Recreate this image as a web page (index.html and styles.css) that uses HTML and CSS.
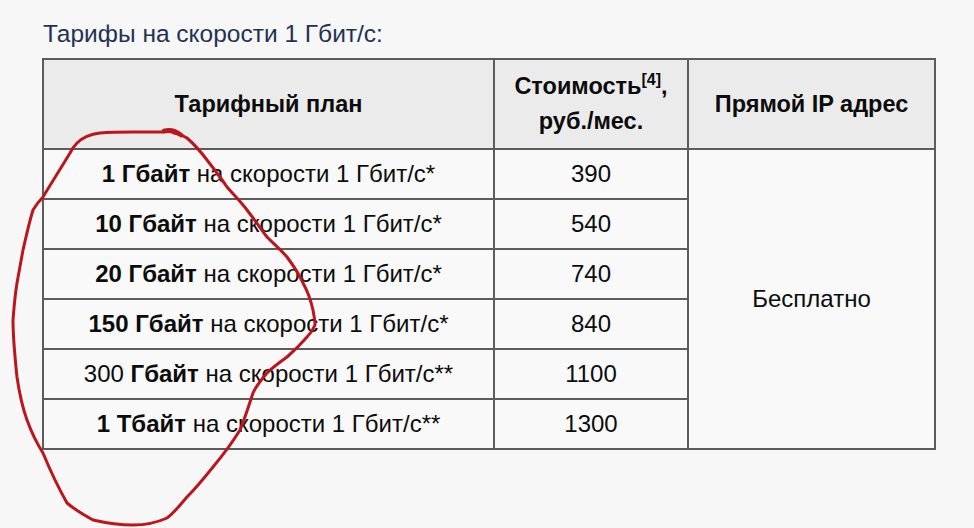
FILE: index.html
```html
<!DOCTYPE html>
<html lang="ru">
<head>
<meta charset="utf-8">
<title>Тарифы</title>
<link rel="stylesheet" href="styles.css">
</head>
<body>
<div class="page">
  <p class="title">Тарифы на скорости 1 Гбит/с:</p>
  <table class="tariffs">
    <colgroup>
      <col class="c1"><col class="c2"><col class="c3">
    </colgroup>
    <thead>
      <tr>
        <th>Тарифный план</th>
        <th>Стоимость<sup>[4]</sup>,<br>руб./мес.</th>
        <th>Прямой IP адрес</th>
      </tr>
    </thead>
    <tbody>
      <tr><td><b>1 Гбайт</b> на скорости 1 Гбит/с*</td><td>390</td><td rowspan="6">Бесплатно</td></tr>
      <tr><td><b>10 Гбайт</b> на скорости 1 Гбит/с*</td><td>540</td></tr>
      <tr><td><b>20 Гбайт</b> на скорости 1 Гбит/с*</td><td>740</td></tr>
      <tr><td><b>150 Гбайт</b> на скорости 1 Гбит/с*</td><td>840</td></tr>
      <tr><td>300 <b>Гбайт</b> на скорости 1 Гбит/с**</td><td>1100</td></tr>
      <tr><td><b>1 Тбайт</b> на скорости 1 Гбит/с**</td><td>1300</td></tr>
    </tbody>
  </table>
  <svg class="circle" width="974" height="528" viewBox="0 0 974 528">
    <path d="M77 143 C84 136 92 134 100 133 C112 132 122 132 133 132 L163 132 C168 131 171 131 174 133 C180 134 184 136 187 138 C195 145 201 152 207 160 C214 169 221 178 227 187 C234 195 241 202 247 210 C254 219 261 229 267 237 C274 244 281 250 287 257 C293 265 299 274 303 283 C308 292 311 301 313 310 C314 316 315 320 315 325 C313 330 310 334 307 337 C301 344 294 351 287 357 C280 362 273 367 267 373 C261 380 256 386 253 393 C249 405 245 418 240 430 C232 443 223 455 213 467 C205 477 196 488 187 497 C180 505 174 513 167 518 C156 523 145 525 133 525 C120 525 106 523 93 520 C84 515 75 510 67 503 C58 487 50 470 43 453 C36 442 31 431 27 420 C22 406 19 391 17 377 C15 358 13 339 13 320 C14 307 15 295 17 283 C19 272 21 261 23 250 C26 237 29 223 33 210 C36 205 39 201 43 197 C52 182 61 168 70 153 C72 149 74 146 77 143 Z" />
    <path class="blob" d="M164 131 C170 129 176 131 181 135" />
  </svg>
</div>
</body>
</html>
```

FILE: styles.css
```css
html, body {
  margin: 0;
  padding: 0;
  background: #f7f7f7;
}
.page {
  position: relative;
  width: 974px;
  height: 528px;
  overflow: hidden;
  font-family: "Liberation Sans", Arial, sans-serif;
  color: #0c0c0c;
}
.title {
  margin: 0;
  padding: 20px 0 0 43px;
  height: 37px;
  box-sizing: border-box;
  font-size: 24.5px;
  line-height: 28px;
  color: #1f3254;
}
.tariffs {
  margin-left: 42px;
  border-collapse: collapse;
  table-layout: fixed;
  width: 892px;
  font-size: 24px;
  margin-top: 21px;
}
.c1 { width: 451px; }
.c2 { width: 194px; }
.c3 { width: 247px; }
.tariffs th,
.tariffs td {
  border: 2px solid #5c5c5c;
  text-align: center;
  padding: 0;
}
.tariffs th {
  background: #ebebeb;
  height: 88px;
  font-size: 23.5px;
  font-weight: bold;
  line-height: 35px;
}
.tariffs td {
  background: #f9f9f9;
  height: 48px;
  font-weight: normal;
  line-height: 28px;
}
.tariffs td b {
  font-weight: bold;
}
.tariffs sup {
  font-size: 16px;
  line-height: 0;
  vertical-align: 9px;
}
.circle {
  position: absolute;
  left: 0;
  top: 0;
  pointer-events: none;
}
.circle path {
  fill: none;
  stroke: #bb161d;
  stroke-width: 3;
  stroke-linecap: round;
  stroke-linejoin: round;
}
.circle .blob {
  stroke-width: 4.5;
}
```
